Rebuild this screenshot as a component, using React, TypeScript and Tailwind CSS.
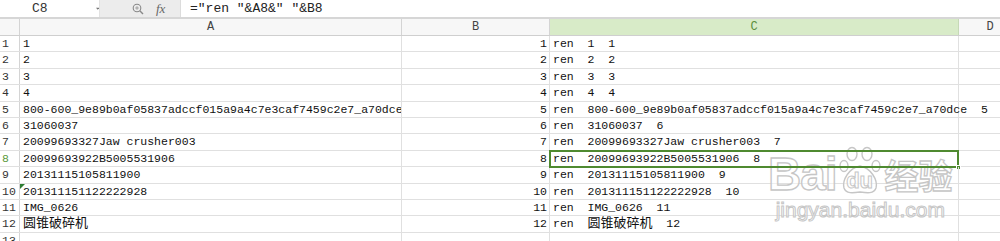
import React from "react";

const colA = [
  "1",
  "2",
  "3",
  "4",
  "800-600_9e89b0af05837adccf015a9a4c7e3caf7459c2e7_a70dce",
  "31060037",
  "20099693327Jaw crusher003",
  "20099693922B5005531906",
  "20131115105811900",
  "201311151122222928",
  "IMG_0626",
  "圆锥破碎机",
];

const mono = "font-['Liberation_Mono','Noto_Sans_CJK_SC',monospace]";

const Watermark = () => (
  <div className="pointer-events-none absolute left-[768px] top-[146px] flex flex-col items-center">
    <div className="flex items-end">
      <span className="font-['Liberation_Sans',sans-serif] text-[46px] font-bold leading-[44px] tracking-[-1px] text-white/50 [-webkit-text-stroke:1.3px_#c6c6c6]">
        Bai
      </span>
      <div className="relative mx-[2px] flex h-[50px] w-[42px] items-end justify-center">
        <svg width="42" height="50" viewBox="0 0 42 50" className="absolute left-0 top-0">
          <g fill="rgba(255,255,255,0.5)" stroke="#c6c6c6" strokeWidth="1.4">
            <ellipse cx="13" cy="8" rx="5" ry="6.5" />
            <ellipse cx="28" cy="8" rx="5" ry="6.5" />
            <ellipse cx="5" cy="20" rx="4" ry="5.5" />
            <ellipse cx="37" cy="20" rx="4" ry="5.5" />
            <path d="M21 20 C10 22 3 34 5 42 C7 48 14 47 21 46 C28 47 35 48 37 42 C39 34 32 22 21 20 Z" />
          </g>
        </svg>
        <span className="relative mb-[3px] font-['Liberation_Sans',sans-serif] text-[22px] font-bold leading-[24px] text-white/50 [-webkit-text-stroke:1px_#c6c6c6]">
          du
        </span>
      </div>
      <span className="ml-[2px] font-['Noto_Sans_CJK_SC',sans-serif] text-[34px] font-bold leading-[42px] text-white/50 [-webkit-text-stroke:1.3px_#c6c6c6]">
        经验
      </span>
    </div>
    <span className="mt-[3px] font-['Liberation_Sans',sans-serif] text-[21px] leading-[22px] text-white/50 [-webkit-text-stroke:1px_#c6c6c6]">
      jingyan.baidu.com
    </span>
  </div>
);

const FormulaBar = () => (
  <div className="flex h-[19px] border-b-2 border-[#d6d6d6] bg-white">
    <div className="flex w-[100px] items-center border-r border-[#e2e2e2] bg-white">
      <span className={`ml-[32px] text-[13px] leading-none text-[#333] ${mono}`}>C8</span>
      <svg width="6" height="4" viewBox="0 0 6 4" className="ml-[48px] mt-[1px]">
        <path d="M0 0 L6 0 L3 3.5 Z" fill="#777" />
      </svg>
    </div>
    <div className="flex w-[80px] items-center bg-[#ececec]">
      <svg width="12" height="12" viewBox="0 0 12 12" className="ml-[32px]">
        <circle cx="5" cy="5" r="3.8" fill="none" stroke="#888" strokeWidth="1.1" />
        <path d="M5 3.2 V6.8 M3.2 5 H6.8" stroke="#999" strokeWidth="0.9" />
        <path d="M7.8 7.8 L11 11" stroke="#888" strokeWidth="1.4" />
      </svg>
      <span className="ml-[12px] font-['Liberation_Serif',serif] text-[13px] italic leading-none text-[#666]">
        fx
      </span>
    </div>
    <div className="flex flex-1 items-center border-l border-[#dcdcdc] bg-white">
      <span className={`ml-[9px] whitespace-pre text-[13px] leading-none text-[#222] ${mono}`}>
        ="ren "&amp;A8&amp;" "&amp;B8
      </span>
    </div>
  </div>
);

const HeaderRow = () => (
  <div className={`flex h-[17px] border-b border-[#cfcfcf] bg-[#f7f7f7] text-[12px] leading-[16px] ${mono}`}>
    <div className="w-[20px] shrink-0 border-r border-[#d4d4d4] bg-[#f7f7f7]" />
    <div className="flex w-[382px] shrink-0 justify-center border-r border-[#d4d4d4] text-[#444]">A</div>
    <div className="flex w-[148px] shrink-0 justify-center border-r border-[#d4d4d4] text-[#444]">B</div>
    <div className="flex w-[409px] shrink-0 justify-center border-r border-[#c6d9b7] bg-[#d8ebc8] text-[#5b8f3c]">
      C
    </div>
    <div className="flex w-[62px] shrink-0 justify-center text-[#444]">D</div>
  </div>
);

const Row = ({ n, a }: { n: number; a: string }) => {
  const selected = n === 8;
  const cjk = /[\u4e00-\u9fff]/.test(a);
  return (
    <div className={`flex h-[16.42px] border-b border-[#e0e0e0] text-[11.5px] leading-[15px] text-[#111] ${mono}`}>
      <div
        className={`relative w-[20px] shrink-0 border-r border-[#d4d4d4] pl-[2px] ${
          selected ? "text-[#5b9a3a]" : "text-[#333]"
        }`}
      >
        {n}
      </div>
      <div className="relative w-[382px] shrink-0 overflow-hidden whitespace-pre border-r border-[#e0e0e0] pl-[3px]">
        {n === 10 && (
          <svg width="5" height="5" viewBox="0 0 5 5" className="absolute left-0 top-0">
            <path d="M0 0 H5 L0 5 Z" fill="#2e7d32" />
          </svg>
        )}
        <span className={cjk ? "text-[13px]" : ""}>{a}</span>
      </div>
      <div className="w-[148px] shrink-0 border-r border-[#e0e0e0] pr-[2px] text-right">{n}</div>
      <div className="relative z-10 w-[409px] shrink-0 whitespace-pre border-r border-[#e0e0e0] pl-[3px]">
        {"ren  "}
        <span className={cjk ? "text-[13px]" : ""}>{a}</span>
        {"  " + n}
        {selected && (
          <div className="absolute -bottom-[2px] -left-[1px] -right-[1px] -top-[1px] border-2 border-[#4f8a30]">
            <div className="absolute -bottom-[4px] -right-[4px] h-[5px] w-[5px] border border-white bg-[#4f8a30]" />
          </div>
        )}
      </div>
      <div className="w-[62px] shrink-0" />
    </div>
  );
};

export default function App() {
  return (
    <div className="relative h-[241px] w-[1000px] overflow-hidden bg-white">
      <FormulaBar />
      <HeaderRow />
      {colA.map((a, i) => (
        <Row key={i} n={i + 1} a={a} />
      ))}
      <div className={`flex h-[16px] text-[11.5px] leading-[15px] text-[#333] ${mono}`}>
        <div className="w-[20px] shrink-0 border-r border-[#d4d4d4] pl-[2px]">13</div>
        <div className="w-[382px] shrink-0 border-r border-[#e0e0e0]" />
        <div className="w-[148px] shrink-0 border-r border-[#e0e0e0]" />
        <div className="w-[409px] shrink-0 border-r border-[#e0e0e0]" />
      </div>
      <Watermark />
    </div>
  );
}
